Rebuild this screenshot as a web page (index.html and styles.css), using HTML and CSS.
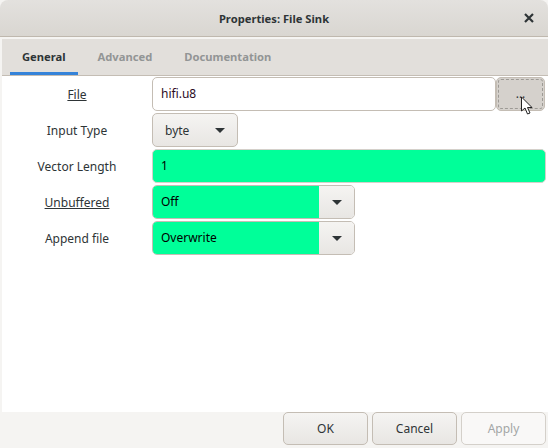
FILE: index.html
```html
<!DOCTYPE html>
<html lang="en">
<head>
<meta charset="UTF-8" />
<title>Properties: File Sink</title>
<link rel="stylesheet" href="styles.css">
</head>
<body>

<div class="window">
  <header class="titlebar">
    <span class="title">Properties: File Sink</span>
    <svg class="close" width="10" height="10" viewBox="0 0 10 10"><path d="M1 1 L9 9 M9 1 L1 9" stroke="#2e3436" stroke-width="2.2" fill="none"/></svg>
  </header>

  <nav class="tabs">
    <span class="tab active">General</span>
    <span class="tab">Advanced</span>
    <span class="tab">Documentation</span>
  </nav>

  <main class="form">
    <div class="row">
      <label class="name"><u>File</u></label>
      <div class="entry-wrap">
        <div class="entry white">hifi.u8</div>
        <div class="browse"><span class="dots">...</span></div>
      </div>
    </div>
    <div class="row">
      <label class="name">Input Type</label>
      <div class="combo-plain">byte <i class="arrow"></i></div>
    </div>
    <div class="row">
      <label class="name">Vector Length</label>
      <div class="entry green">1</div>
    </div>
    <div class="row">
      <label class="name"><u>Unbuffered</u></label>
      <div class="combo"><div class="combo-text">Off</div><div class="combo-btn"><i class="arrow"></i></div></div>
    </div>
    <div class="row">
      <label class="name">Append file</label>
      <div class="combo"><div class="combo-text">Overwrite</div><div class="combo-btn"><i class="arrow"></i></div></div>
    </div>
  </main>

  <footer class="actions">
    <button>OK</button>
    <button>Cancel</button>
    <button disabled>Apply</button>
  </footer>

  <svg class="cursor" width="14" height="20" viewBox="0 0 14 20"><path d="M1.5 1 V15 L5 12 L7.5 18 L10 17 L7.5 11.5 H12 Z" fill="#fff" stroke="#222" stroke-width="1"/></svg>
</div>

</body>
</html>
```

FILE: styles.css
```css
html, body {
  margin: 0;
  height: 100%;
}
body {
  font-family: "Noto Sans", sans-serif;
  font-size: 12px;
  color: #2e3436;
  background: #f5f4f2;
}
.window {
  position: relative;
  height: 448px;
  display: flex;
  flex-direction: column;
  overflow: hidden;
  background: #f5f4f2;
}
.titlebar {
  height: 36px;
  flex: none;
  display: flex;
  align-items: center;
  justify-content: center;
  position: relative;
  background: linear-gradient(#e3e1de, #d9d6d1);
  border-bottom: 1px solid #bfb8ae;
  border-radius: 8px 8px 0 0;
}
.title {
  font-weight: bold;
  font-size: 11.2px;
}
.close {
  position: absolute;
  right: 14px;
  top: 13px;
}
.tabs {
  margin: 2px 0 0 2px;
  height: 36px;
  flex: none;
  display: flex;
  background: #e2dfdb;
  border-bottom: 1px solid #c4bdb4;
  padding-left: 8px;
  gap: 8px;
}
.tab {
  padding: 0 12px;
  line-height: 36px;
  font-weight: bold;
  font-size: 11.2px;
  color: #929595;
}
.tab.active {
  color: #2e3436;
  border-bottom: 3px solid #3583d9;
  height: 33px;
  line-height: 36px;
}
.form {
  flex: 1;
  margin-left: 2px;
  background: #fff;
  padding-top: 1px;
  display: flex;
  flex-direction: column;
  gap: 2px;
}
.row {
  display: flex;
  align-items: center;
  height: 34px;
}
.name {
  width: 150px;
  text-align: center;
}
.entry-wrap {
  display: flex;
  flex: 1;
  padding-right: 3px;
}
.entry {
  flex: 1;
  height: 32px;
  line-height: 32px;
  padding-left: 8px;
  border: 1px solid #c4bdb4;
  border-radius: 5px;
  color: #000;
}
.entry.white {
  color: #2b0a1e;
}
.entry.green {
  background: #00ff99;
  margin-right: 2px;
  border-color: #d4d0ca;
}
.browse {
  width: 47px;
  height: 32px;
  border: 1px solid #c4bdb4;
  border-radius: 5px;
  background: #d5d1cc;
  outline: 1px dashed #9d9a95;
  outline-offset: -3px;
  text-align: center;
  line-height: 32px;
  position: relative;
}
.dots {
  color: #2e3436;
}
.combo-plain {
  width: 60px;
  height: 32px;
  padding: 0 12px;
  display: flex;
  align-items: center;
  justify-content: space-between;
  border: 1px solid #c4bdb4;
  border-radius: 5px;
  background: linear-gradient(#f5f4f2, #e8e6e3);
}
.arrow {
  display: block;
  width: 0;
  height: 0;
  border-left: 5px solid transparent;
  border-right: 5px solid transparent;
  border-top: 5px solid #2e3436;
}
.combo {
  display: flex;
  width: 203px;
  height: 34px;
  box-sizing: border-box;
  border: 1px solid #c4bdb4;
  border-radius: 5px;
  overflow: hidden;
}
.combo-text {
  flex: 1;
  background: #00ff99;
  line-height: 32px;
  padding-left: 8px;
  color: #000;
}
.combo-btn {
  width: 35px;
  box-sizing: border-box;
  padding-left: 1px;
  display: flex;
  align-items: center;
  justify-content: center;
  background: linear-gradient(#f5f4f2, #e8e6e3);
}
.actions {
  height: 36px;
  flex: none;
  display: flex;
  justify-content: flex-end;
  gap: 4px;
  padding-right: 2px;
}
.actions button {
  width: 85px;
  height: 33px;
  padding: 0;
  font: inherit;
  color: #2e3436;
  border: 1px solid #c4bdb4;
  border-radius: 5px;
  background: linear-gradient(#f5f4f2, #e8e6e3);
}
.actions button:disabled {
  background: #f9f8f7;
  color: #a3a6a6;
  border-color: #d4d0ca;
}
.cursor {
  position: absolute;
  left: 520px;
  top: 96px;
}
```
